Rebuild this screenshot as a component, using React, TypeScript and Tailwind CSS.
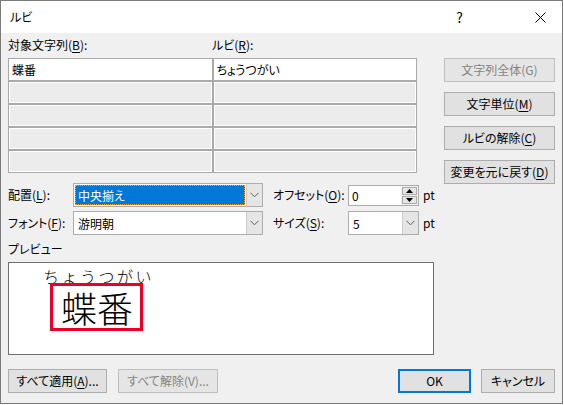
import React from 'react';

const font = { fontFamily: '"Noto Sans CJK JP", "Noto Sans", sans-serif' };

function U({ children }: { children: React.ReactNode }) {
    return <span className="underline underline-offset-2">{children}</span>;
}

function Btn({ children, w, disabled, primary }: { children: React.ReactNode; w: string; disabled?: boolean; primary?: boolean }) {
    return (
        <div
            className={`${w} h-[24px] flex items-center justify-center whitespace-nowrap text-[12px] bg-[#e1e1e1] ${
                primary ? 'border-2 border-[#0078d7]' : disabled ? 'border border-[#bfbfbf] bg-[#e5e5e5] text-[#838383]' : 'border border-[#adadad] text-black'
            }`}
        >
            {children}
        </div>
    );
}

function Chevron() {
    return (
        <svg width="9" height="6" viewBox="0 0 9 6">
            <path d="M0.5 0.8 L4.5 4.8 L8.5 0.8" fill="none" stroke="#606060" strokeWidth="1" />
        </svg>
    );
}

function Select({ w, children, focused }: { w: string; children: React.ReactNode; focused?: boolean }) {
    return (
        <div className={`${w} h-[24px] flex border border-[#adadad] bg-white`}>
            <div className="flex-1 p-px">
                {focused ? (
                    <div className="h-full bg-[#0078d7] border border-dotted border-[#f0a030] text-white text-[12px] leading-[19px] pl-[2px]">
                        {children}
                    </div>
                ) : (
                    <div className="h-full text-[12px] leading-[21px] pl-[3px]">{children}</div>
                )}
            </div>
            <div className="w-[16px] bg-[#e5e5e5] border-l border-[#cccccc] flex items-center justify-center">
                <Chevron />
            </div>
        </div>
    );
}

function Spin() {
    return (
        <div className="w-[71px] h-[21px] flex border border-[#adadad] bg-white">
            <div className="flex-1 text-[12px] leading-[19px] pl-[3px]">0</div>
            <div className="w-[17px] flex flex-col gap-px p-px bg-[#f0f0f0]">
                <div className="flex-1 bg-[#e5e5e5] border border-[#adadad] flex items-center justify-center">
                    <svg width="7" height="4" viewBox="0 0 7 4"><path d="M3.5 0 L7 4 L0 4 Z" fill="#000" /></svg>
                </div>
                <div className="flex-1 bg-[#e5e5e5] border border-[#adadad] flex items-center justify-center">
                    <svg width="7" height="4" viewBox="0 0 7 4"><path d="M0 0 L7 0 L3.5 4 Z" fill="#000" /></svg>
                </div>
            </div>
        </div>
    );
}

function Cell({ children, filled }: { children?: React.ReactNode; filled?: boolean }) {
    return filled ? (
        <div className="h-[21px] bg-white text-[12px] leading-[21px] pl-[3px]">{children}</div>
    ) : (
        <div className="h-[21px] bg-[#ececec] border border-white" />
    );
}

export default function App() {
    return (
        <div className="w-[564px] h-[405px] bg-white text-black [font-feature-settings:'palt']" style={font}>
            <div className="w-[563px] h-[404px] border border-[#7a7a7a] flex flex-col">
                {/* title bar */}
                <div className="h-[32px] bg-white flex items-center">
                    <span className="ml-[9px] text-[12px]">ルビ</span>
                    <span className="ml-auto mr-[72px] text-[14px]">?</span>
                    <svg className="mr-[16px]" width="11" height="11" viewBox="0 0 11 11">
                        <path d="M0.5 0.5 L10.5 10.5 M10.5 0.5 L0.5 10.5" stroke="#000" strokeWidth="1" />
                    </svg>
                </div>

                {/* body */}
                <div className="flex-1 bg-[#f0f0f0] pl-[7px] flex flex-col">
                    <div className="flex">
                        <div className="w-[436px] flex flex-col">
                            <div className="mt-[4px] h-[16px] flex text-[12px] leading-[16px] whitespace-nowrap">
                                <span className="w-[204px]">対象文字列(<U>B</U>):</span>
                                <span>ルビ(<U>R</U>):</span>
                            </div>
                            <div className="mt-[5px] w-[409px] bg-[#a9a9a9] p-px grid grid-cols-2 gap-[2px]">
                                <Cell filled>蝶番</Cell>
                                <Cell filled>ちょうつがい</Cell>
                                <Cell /><Cell />
                                <Cell /><Cell />
                                <Cell /><Cell />
                                <Cell /><Cell />
                            </div>
                            <div className="mt-[10px] h-[24px] flex items-center text-[12px] whitespace-nowrap">
                                <span className="w-[65px]">配置(<U>L</U>):</span>
                                <Select w="w-[190px]" focused>中央揃え</Select>
                                <span className="ml-[10px] w-[75px]">オフセット(<U>O</U>):</span>
                                <Spin />
                                <span className="ml-[4px]">pt</span>
                            </div>
                            <div className="mt-[4px] h-[24px] flex items-center text-[12px] whitespace-nowrap">
                                <span className="w-[65px]">フォント(<U>F</U>):</span>
                                <Select w="w-[190px]">游明朝</Select>
                                <span className="ml-[10px] w-[75px]">サイズ(<U>S</U>):</span>
                                <Select w="w-[71px]">5</Select>
                                <span className="ml-[4px]">pt</span>
                            </div>
                            <div className="mt-[6px] h-[16px] text-[12px] leading-[16px]">プレビュー</div>
                            <div className="mt-[5px] w-[426px] h-[93px] bg-white border border-[#6f6f6f] pl-[34px] pt-[5px]">
                                <div className="h-[16px] text-[16px] leading-[16px] tracking-[2.5px] font-light [font-feature-settings:normal]">ちょうつがい</div>
                                <div className="ml-[7px] -mt-[1px] w-[93px] h-[48px] border-[3px] border-[#e8002a] relative flex items-center pl-[8px]">
                                    <span className="text-[36px] leading-[36px] font-light">蝶番</span>
                                </div>
                            </div>
                        </div>
                        <div className="mt-[25px] flex flex-col gap-[10px]">
                            <Btn w="w-[111px]" disabled>文字列全体(G)</Btn>
                            <Btn w="w-[111px]">文字単位(<U>M</U>)</Btn>
                            <Btn w="w-[111px]">ルビの解除(<U>C</U>)</Btn>
                            <Btn w="w-[111px]">変更を元に戻す(<U>D</U>)</Btn>
                        </div>
                    </div>
                    <div className="mt-[14px] flex">
                        <Btn w="w-[99px]">すべて適用(<U>A</U>)...</Btn>
                        <div className="ml-[11px]">
                            <Btn w="w-[100px]" disabled>すべて解除(V)...</Btn>
                        </div>
                        <div className="ml-[180px]">
                            <Btn w="w-[73px]" primary>OK</Btn>
                        </div>
                        <div className="ml-[10px]">
                            <Btn w="w-[74px]">キャンセル</Btn>
                        </div>
                    </div>
                </div>
            </div>
        </div>
    );
}
